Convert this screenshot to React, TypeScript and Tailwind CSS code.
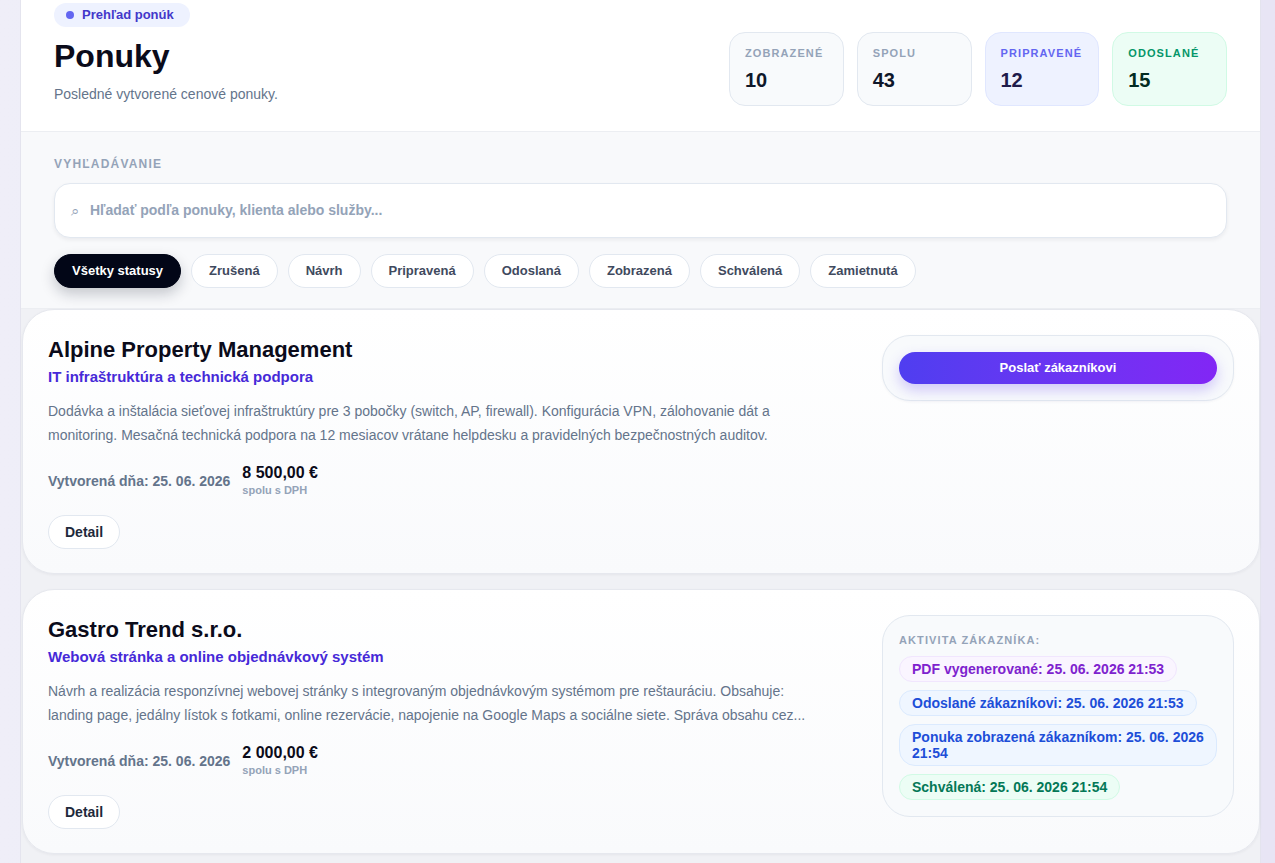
import React from "react";

type Pill = { text: string; cls: string };

const stats = [
  { label: "Zobrazené", value: "10", box: "bg-[#f8fafc] border-[#e2e8f0]", l: "text-[#94a3b8]", v: "text-[#0f172a]" },
  { label: "Spolu", value: "43", box: "bg-[#f8fafc] border-[#e2e8f0]", l: "text-[#94a3b8]", v: "text-[#0f172a]" },
  { label: "Pripravené", value: "12", box: "bg-[#eef2ff] border-[#e0e7ff]", l: "text-[#6366f1]", v: "text-[#1e1b4b]" },
  { label: "Odoslané", value: "15", box: "bg-[#ecfdf5] border-[#d1fae5]", l: "text-[#059669]", v: "text-[#022c22]" },
];

const chips = ["Zrušená", "Návrh", "Pripravená", "Odoslaná", "Zobrazená", "Schválená", "Zamietnutá"];

function OfferCard({
  title,
  subtitle,
  desc,
  price,
  right,
}: {
  title: string;
  subtitle: string;
  desc: string;
  price: string;
  right: React.ReactNode;
}) {
  return (
    <div className="flex items-start justify-between gap-6 rounded-[32px] border border-[#e6e8ee] bg-gradient-to-b from-white to-[#f9fafc] px-[25px] pt-[25px] pb-[24px] shadow-[0_1px_3px_rgba(15,23,42,0.05)]">
      <div className="min-w-0 flex-1">
        <h2 className="text-[22px] leading-[30px] font-bold text-[#0b0b1a]">{title}</h2>
        <div className="text-[15px] leading-6 font-bold text-[#4629d8]">{subtitle}</div>
        <p className="mt-[10px] max-w-[775px] text-[14px] leading-6 text-[#64748b]">{desc}</p>
        <div className="mt-4 flex items-center gap-3">
          <div className="pt-[2px] text-[14px] leading-5 font-bold text-[#64748b]">Vytvorená dňa: 25. 06. 2026</div>
          <div className="flex flex-col">
            <span className="text-[16px] leading-5 font-bold text-[#0b0b1a]">{price}</span>
            <span className="text-[11px] leading-[14px] font-bold text-[#94a3b8]">spolu s DPH</span>
          </div>
        </div>
        <button className="mt-[18px] rounded-full border border-[#e2e8f0] bg-white px-4 py-[6px] text-[14px] leading-5 font-bold text-[#1e293b]">
          Detail
        </button>
      </div>
      <div className="w-[352px] shrink-0">{right}</div>
    </div>
  );
}

export default function App() {
  const pills: Pill[] = [
    { text: "PDF vygenerované: 25. 06. 2026 21:53", cls: "bg-[#faf5ff] border-[#f1e6fe] text-[#7e22ce]" },
    { text: "Odoslané zákazníkovi: 25. 06. 2026 21:53", cls: "bg-[#eff6ff] border-[#dbeafe] text-[#1d4ed8]" },
    { text: "Ponuka zobrazená zákazníkom: 25. 06. 2026 21:54", cls: "bg-[#eff6ff] border-[#dbeafe] text-[#1d4ed8]" },
    { text: "Schválená: 25. 06. 2026 21:54", cls: "bg-[#ecfdf5] border-[#d1fae5] text-[#047857]" },
  ];

  return (
    <div className="h-[863px] overflow-hidden bg-gradient-to-r from-[#efeef8] to-[#e8e5f5] pl-5 pr-[14px] font-['Liberation_Sans',Arial,sans-serif]">
      <div className="min-h-[863px] border-x border-[#e4e4ee] bg-[#f0f1f5]">
        {/* Header */}
        <div className="flex items-start justify-between bg-white px-[33px] pt-[2px] pb-[25px]">
          <div>
            <div className="inline-flex h-6 items-center gap-2 rounded-full bg-[#eef2ff] pl-3 pr-4">
              <span className="h-2 w-2 rounded-full bg-[#6366f1]" />
              <span className="text-[13px] leading-4 font-bold text-[#4338ca]">Prehľad ponúk</span>
            </div>
            <h1 className="mt-[9px] text-[32px] leading-10 font-extrabold text-[#0b0b1a]">Ponuky</h1>
            <p className="mt-2 text-[14px] leading-5 text-[#64748b]">Posledné vytvorené cenové ponuky.</p>
          </div>
          <div className="mt-[30px] grid w-[498px] grid-cols-4 gap-[13px]">
            {stats.map((s) => (
              <div key={s.label} className={`rounded-2xl border px-[15px] pt-[13px] pb-[11px] ${s.box}`}>
                <div className={`text-[11px] leading-[14px] font-bold uppercase tracking-widest ${s.l}`}>{s.label}</div>
                <div className={`mt-[6px] text-[20px] leading-7 font-bold ${s.v}`}>{s.value}</div>
              </div>
            ))}
          </div>
        </div>

        {/* Search */}
        <div className="border-y border-[#eceef2] bg-[#f8f9fb] px-[33px] pt-[24px] pb-[20px]">
          <div className="text-[12px] leading-4 font-bold uppercase tracking-widest text-[#94a3b8]">Vyhľadávanie</div>
          <div className="mt-[11px] flex h-[55px] items-center gap-[11px] rounded-2xl border border-[#e2e8f0] bg-white px-4 shadow-[0_2px_4px_rgba(15,23,42,0.06)]">
            <span className="text-[15px] leading-5 text-[#94a3b8] font-['DejaVu_Sans',sans-serif]">⌕</span>
            <input
              className="flex-1 bg-transparent text-[14px] font-bold text-[#334155] outline-none placeholder:text-[#94a3b8]"
              placeholder="Hľadať podľa ponuky, klienta alebo služby..."
            />
          </div>
          <div className="mt-[16px] flex gap-[10px]">
            <button className="rounded-full border border-[#020617] bg-[#020617] px-[17px] py-[7px] text-[13px] leading-[18px] font-bold text-white shadow-[0_6px_14px_rgba(15,23,42,0.22)]">
              Všetky statusy
            </button>
            {chips.map((c) => (
              <button
                key={c}
                className="rounded-full border border-[#e2e8f0] bg-white px-[17px] py-[7px] text-[13px] leading-[18px] font-bold text-[#3f4a5e]"
              >
                {c}
              </button>
            ))}
          </div>
        </div>

        {/* Cards */}
        <div className="flex flex-col gap-[15px] pl-[1px] pr-0">
          <OfferCard
            title="Alpine Property Management"
            subtitle="IT infraštruktúra a technická podpora"
            desc="Dodávka a inštalácia sieťovej infraštruktúry pre 3 pobočky (switch, AP, firewall). Konfigurácia VPN, zálohovanie dát a monitoring. Mesačná technická podpora na 12 mesiacov vrátane helpdesku a pravidelných bezpečnostných auditov."
            price="8 500,00 €"
            right={
              <div className="rounded-[28px] border border-[#e2e8f0] bg-[#f8fafc] p-4 shadow-[0_1px_3px_rgba(15,23,42,0.04)]">
                <button className="w-full rounded-full bg-gradient-to-r from-[#4f3ef0] to-[#8226f5] py-2 text-[13px] leading-4 font-bold text-white shadow-[0_6px_14px_rgba(99,70,240,0.28)]">
                  Poslať zákazníkovi
                </button>
              </div>
            }
          />
          <OfferCard
            title="Gastro Trend s.r.o."
            subtitle="Webová stránka a online objednávkový systém"
            desc="Návrh a realizácia responzívnej webovej stránky s integrovaným objednávkovým systémom pre reštauráciu. Obsahuje: landing page, jedálny lístok s fotkami, online rezervácie, napojenie na Google Maps a sociálne siete. Správa obsahu cez..."
            price="2 000,00 €"
            right={
              <div className="rounded-[28px] border border-[#e2e8f0] bg-[#f8fafc] p-4">
                <div className="text-[11px] leading-4 font-bold uppercase tracking-widest text-[#94a3b8]">Aktivita zákazníka:</div>
                <div className="mt-2 flex flex-col items-start gap-2">
                  {pills.map((p) => (
                    <span
                      key={p.text}
                      className={`rounded-2xl border px-3 py-1 text-[14px] leading-4 font-bold ${p.cls}`}
                    >
                      {p.text}
                    </span>
                  ))}
                </div>
              </div>
            }
          />
        </div>
      </div>
    </div>
  );
}
